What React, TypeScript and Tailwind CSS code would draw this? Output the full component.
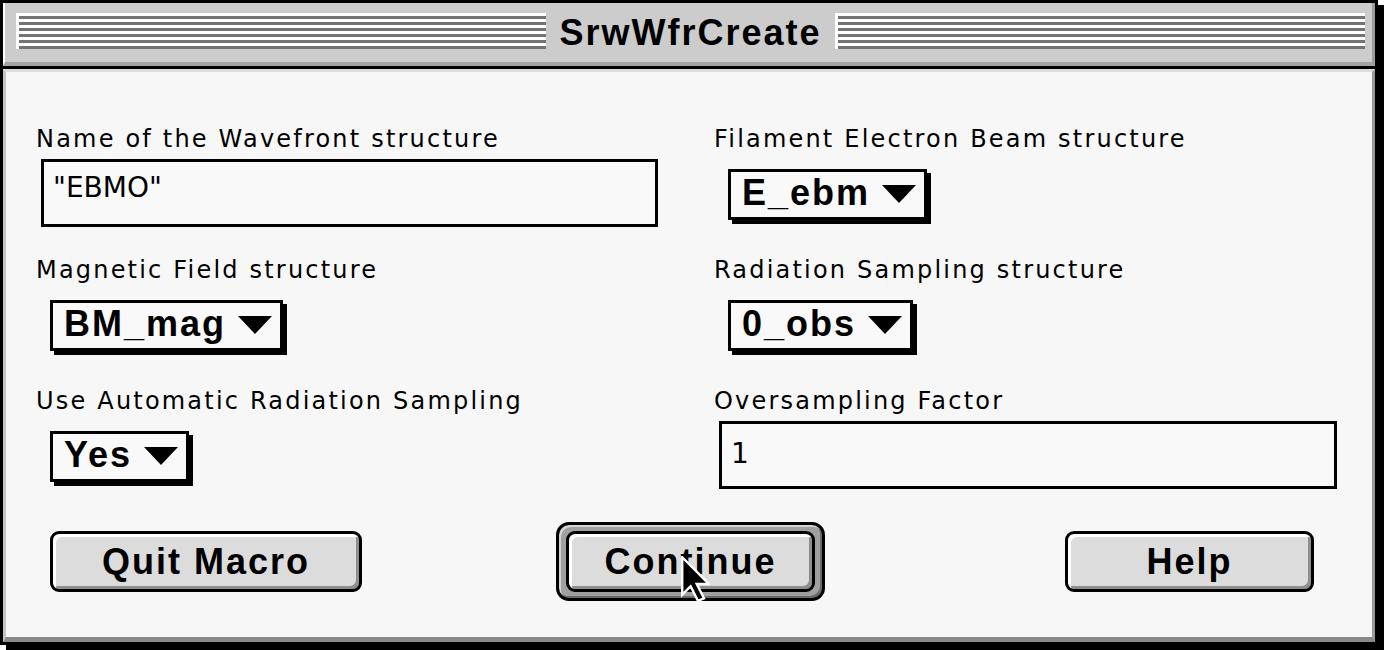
const label = "block font-['DejaVu_Sans',sans-serif] text-[24px] leading-[24px] tracking-[2.2px] text-black whitespace-nowrap";
const chicago = "font-['Liberation_Sans',sans-serif] font-bold text-[36px] leading-[36px] tracking-[2px] text-black whitespace-nowrap";

function Stripes() {
  return (
    <div className="flex-1 h-[36px] border-l-[3px] border-white bg-[repeating-linear-gradient(to_bottom,#ffffff_0px,#ffffff_3px,#737373_3px,#737373_6px)]" />
  );
}

function Popup({ value }: { value: string }) {
  return (
    <div className="mt-[18px] ml-[14px] self-start flex items-center h-[51px] pl-[11px] pr-[8px] pb-[3px] border-[3px] border-black bg-[#f9f9f9] shadow-[4px_4px_0_0_#000]">
      <span className={chicago}>{value}</span>
      <svg width="34" height="18" viewBox="0 0 34 18" className="ml-[12px] mt-[2px]">
        <polygon points="0,0 34,0 17,18" fill="#000" />
      </svg>
    </div>
  );
}

function Field({ value, w, pt }: { value: string; w: string; pt: string }) {
  return (
    <div className={`mt-[8px] ml-[5px] h-[68px] ${w} ${pt} border-[3px] border-black bg-[#f9f9f9] pl-[9px]`}>
      <span className="font-['DejaVu_Sans',sans-serif] text-[28px] leading-[28px] text-black">{value}</span>
    </div>
  );
}

function Button({ text, w }: { text: string; w: string }) {
  return (
    <div
      className={`${w} h-[61px] flex items-center justify-center rounded-[9px] border-[3px] border-black bg-[#dcdcdc] shadow-[inset_3px_3px_0_#ffffff,inset_-3px_-3px_0_#8e8e8e]`}
    >
      <span className={chicago}>{text}</span>
    </div>
  );
}

function Cursor() {
  return (
    <svg
      width="29"
      height="46"
      viewBox="0 0 12 19"
      className="absolute left-[122px] top-[31px]"
    >
      <polygon
        points="0.5,0.5 0.5,16 4,12.5 7,18.5 9.5,17.5 6.5,11.5 11.5,11.5"
        fill="#000"
        stroke="#fff"
        strokeWidth="1"
      />
    </svg>
  );
}

export default function App() {
  return (
    <div className="w-[1384px] h-[650px] bg-white">
      <div className="w-[1378px] h-[645px] border-[3px] border-black shadow-[6px_5px_0_0_#000] flex flex-col">
        {/* title bar */}
        <div className="h-[63px] bg-[#cccccc] border-l-[2px] border-l-white border-b-[4px] border-b-[#a3a3a3] border-r-[3px] border-r-[#9c9c9c] pt-[10px] pl-[11px] pr-[7px]">
          <div className="flex h-[36px]">
            <Stripes />
            <div className="px-[13px] flex items-start">
              <span className={`${chicago} tracking-[2.5px] pt-[2px]`}>SrwWfrCreate</span>
            </div>
            <Stripes />
          </div>
        </div>
        <div className="h-[3px] bg-black" />

        {/* dialog body */}
        <div className="flex-1 bg-[#f7f7f7] border-t-[3px] border-t-[#dedede] border-l-[3px] border-l-[#c4c4c4] border-r-[3px] border-r-[#9a9a9a] border-b-[5px] border-b-[#8a8a8a] pt-[55px] pl-[30px]">
          <div className="grid grid-cols-[678px_1fr] auto-rows-[131px]">
            <div className="flex flex-col">
              <span className={label}>Name of the Wavefront structure</span>
              <Field value={'"EBMO"'} w="w-[617px]" pt="pt-[12px]" />
            </div>
            <div className="flex flex-col">
              <span className={label}>Filament Electron Beam structure</span>
              <Popup value="E_ebm" />
            </div>
            <div className="flex flex-col">
              <span className={label}>Magnetic Field structure</span>
              <Popup value="BM_mag" />
            </div>
            <div className="flex flex-col">
              <span className={label}>Radiation Sampling structure</span>
              <Popup value="0_obs" />
            </div>
            <div className="flex flex-col">
              <span className={label}>Use Automatic Radiation Sampling</span>
              <Popup value="Yes" />
            </div>
            <div className="flex flex-col">
              <span className={label}>Oversampling Factor</span>
              <Field value="1" w="w-[618px]" pt="pt-[16px]" />
            </div>
          </div>

          <div className="flex items-start mt-[2px]">
            <div className="ml-[14px] mt-[9px]">
              <Button text="Quit Macro" w="w-[312px]" />
            </div>
            <div className="relative ml-[194px] py-[6px] px-[7px] rounded-[13px] border-[3px] border-black bg-[#a0a0a0] shadow-[inset_2px_2px_0_#d4d4d4,inset_-2px_-2px_0_#6a6a6a]">
              <Button text="Continue" w="w-[249px]" />
              <Cursor />
            </div>
            <div className="ml-[240px] mt-[9px]">
              <Button text="Help" w="w-[249px]" />
            </div>
          </div>
        </div>
      </div>
    </div>
  );
}
